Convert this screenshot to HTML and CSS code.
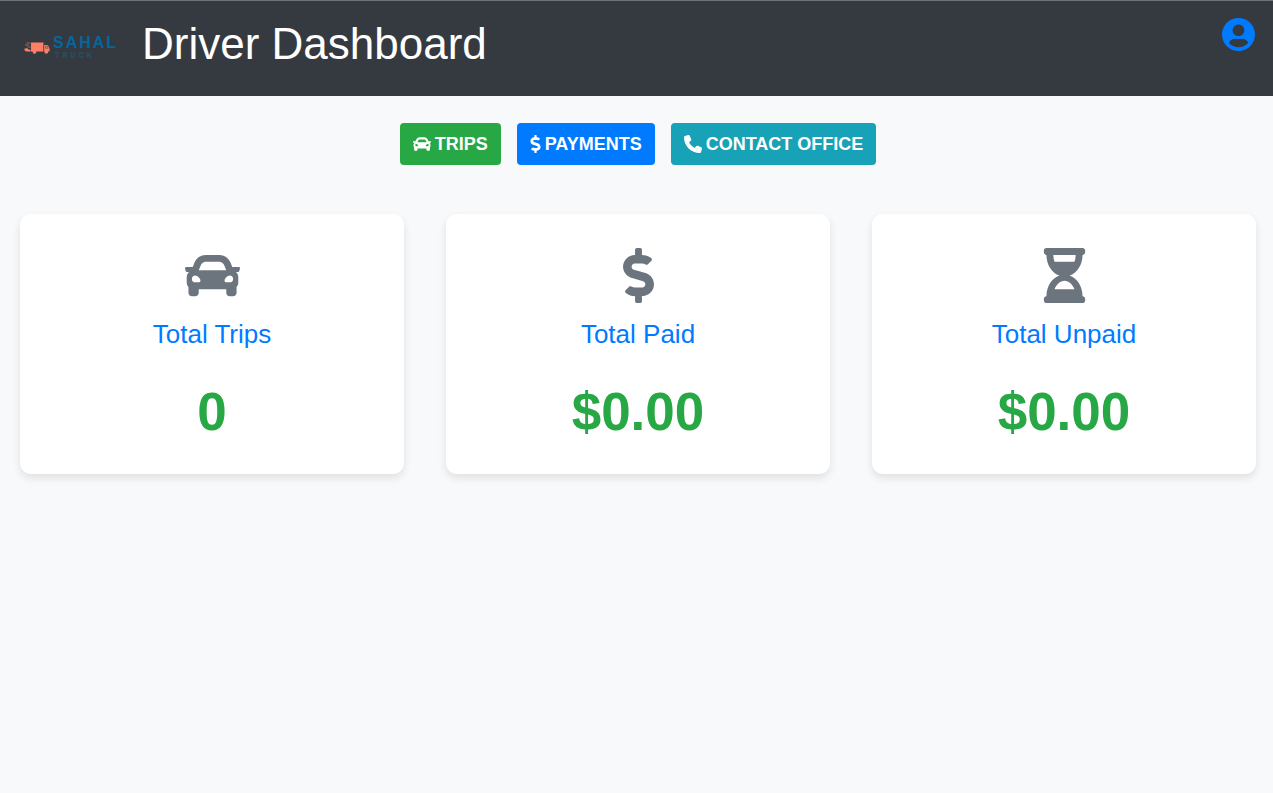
FILE: index.html
```
<!DOCTYPE html>
<html lang="en">
<head>
<meta charset="utf-8">
<meta name="viewport" content="width=device-width, initial-scale=1">
<title>Driver Dashboard</title>
<link rel="stylesheet" href="styles.css">
</head>
<body>
<svg class="sprite" aria-hidden="true">
  <symbol id="car" viewBox="0 0 512 512"><path d="M499.99 176h-59.87l-16.64-41.6C406.38 91.63 365.57 64 319.5 64h-127c-46.06 0-86.88 27.63-103.99 70.4L71.87 176H12.01C4.2 176-1.53 183.34.37 190.91l6 24C7.7 220.25 12.5 224 18.01 224h20.07C24.65 235.73 16 252.78 16 272v48c0 16.12 6.16 30.67 16 41.93V416c0 17.67 14.33 32 32 32h32c17.67 0 32-14.33 32-32v-32h256v32c0 17.67 14.33 32 32 32h32c17.67 0 32-14.33 32-32v-54.07c9.84-11.25 16-25.8 16-41.93v-48c0-19.22-8.65-36.27-22.07-48H494c5.51 0 10.31-3.75 11.64-9.09l6-24c1.89-7.57-3.84-14.91-11.65-14.91zm-352.06-17.83c7.29-18.22 24.94-30.17 44.57-30.17h127c19.63 0 37.28 11.95 44.57 30.17L384 208H128l19.93-49.83zM96 319.8c-19.2 0-32-12.76-32-31.9S76.8 256 96 256s48 28.71 48 47.85-28.8 15.95-48 15.95zm320 0c-19.2 0-48 3.19-48-15.95S396.8 256 416 256s32 12.76 32 31.9-12.8 31.9-32 31.9z"/></symbol>
  <symbol id="dollar" viewBox="0 0 288 512"><path d="M209.2 233.4l-108-31.6C88.7 198.2 80 186.5 80 173.5c0-16.3 13.2-29.5 29.5-29.5h66.3c12.2 0 24.2 3.7 34.2 10.5 6.1 4.1 14.3 3.1 19.5-2l34.8-34c7.1-6.9 6.1-18.4-1.8-24.5C238 74.8 207.4 64.1 176 64V16c0-8.8-7.2-16-16-16h-32c-8.8 0-16 7.2-16 16v48h-2.5C45.8 64-5.4 118.7.5 183.6c4.2 46.1 39.4 83.6 83.8 96.6l102.5 30c12.5 3.7 21.2 15.3 21.2 28.3 0 16.3-13.2 29.5-29.5 29.5h-66.3C100 368 88 364.3 78 357.5c-6.1-4.1-14.3-3.1-19.5 2l-34.8 34c-7.1 6.9-6.1 18.4 1.8 24.5 24.5 19.2 55.1 29.9 86.5 30v48c0 8.8 7.2 16 16 16h32c8.8 0 16-7.2 16-16v-48.2c46.6-.9 90.3-28.6 105.7-72.7 21.5-61.6-14.6-124.8-72.5-141.7z"/></symbol>
  <symbol id="hourglass" viewBox="0 0 384 512"><path d="M360 0H24C10.745 0 0 10.745 0 24v16c0 13.255 10.745 24 24 24 0 90.965 51.016 167.734 120.842 192C75.016 280.266 24 357.035 24 448c-13.255 0-24 10.745-24 24v16c0 13.255 10.745 24 24 24h336c13.255 0 24-10.745 24-24v-16c0-13.255-10.745-24-24-24 0-90.965-51.016-167.734-120.842-192C308.984 231.734 360 154.965 360 64c13.255 0 24-10.745 24-24V24c0-13.255-10.745-24-24-24zm-75.078 384H99.08c17.059-46.797 52.096-80 92.92-80 40.821 0 75.862 33.196 92.922 80zm.019-256H99.078C91.988 108.548 88 86.748 88 64h208c0 22.805-3.987 44.587-11.059 64z"/></symbol>
  <symbol id="phone" viewBox="0 0 512 512"><path d="M164.9 24.6c-7.7-18.6-28-28.5-47.4-23.2l-88 24C12.1 30.2 0 46 0 64C0 311.4 200.6 512 448 512c18 0 33.8-12.1 38.6-29.5l24-88c5.3-19.4-4.6-39.7-23.2-47.4l-96-40c-16.3-6.8-35.2-2.1-46.3 11.6L304.7 368C234.3 334.7 177.3 277.7 144 207.3L193.3 167c13.7-11.2 18.4-30 11.6-46.3l-40-96z"/></symbol>
  <symbol id="user" viewBox="0 8 496 496"><path d="M248 8C111 8 0 119 0 256s111 248 248 248 248-111 248-248S385 8 248 8zm0 96c48.6 0 88 39.4 88 88s-39.4 88-88 88-88-39.4-88-88 39.4-88 88-88zm0 344c-58.7 0-111.3-26.6-146.5-68.2 18.8-35.4 55.6-59.8 98.5-59.8 2.4 0 4.8.4 7.1 1.1 13 4.2 26.6 6.9 40.9 6.9 14.3 0 28-2.7 40.9-6.9 2.3-.7 4.7-1.1 7.1-1.1 42.9 0 79.7 24.4 98.5 59.8C359.3 421.4 306.7 448 248 448z"/></symbol>
</svg>

<header class="topbar">
  <div class="brand">
    <a class="logo" href="#">
      <svg class="truck" viewBox="0 0 26 12" aria-hidden="true">
        <path d="M7 1.2Q7 .5 7.8.5H19.500V9.500H7zM20 3h3q.8 0 1.200.8l1.300 2.500v2.700q0 .5-.6.5H20z"/>
        <path d="M0 6.500q2 .6 2.500-.7Q4 7.500 6.600 8v1.500H2.500Q.4 9 0 6.500z"/>
        <path class="speed" d="M2.500 1h4M1 3h4M3.500 5h3"/>
        <circle cx="10.500" cy="9.800" r="1.900"/>
        <circle cx="22.300" cy="9.800" r="1.900"/>
        <path class="cut" d="M19.800 2v7M21.500 4.200h1.800l.9 2h-2.700z"/>
      </svg>
      <span class="wordmark">
        <span class="name">SAHAL</span>
        <span class="sub">TRUCK</span>
      </span>
    </a>
    <h1 class="title">Driver Dashboard</h1>
  </div>
  <button class="profile" type="button" aria-label="Profile"><svg class="profile-icon" aria-hidden="true"><use href="#user"/></svg></button>
</header>

<main>
  <nav class="actions" aria-label="Sections">
    <a class="btn btn-trips" href="#"><svg class="btn-icon" aria-hidden="true"><use href="#car"/></svg>TRIPS</a>
    <a class="btn btn-payments" href="#"><svg class="btn-icon narrow" aria-hidden="true"><use href="#dollar"/></svg>PAYMENTS</a>
    <a class="btn btn-contact" href="#"><svg class="btn-icon" aria-hidden="true"><use href="#phone"/></svg>CONTACT OFFICE</a>
  </nav>
  <section class="cards">
    <article class="card">
      <svg class="card-icon" aria-hidden="true"><use href="#car"/></svg>
      <h2 class="card-title">Total Trips</h2>
      <p class="card-value">0</p>
    </article>
    <article class="card">
      <svg class="card-icon" aria-hidden="true"><use href="#dollar"/></svg>
      <h2 class="card-title">Total Paid</h2>
      <p class="card-value">$0.00</p>
    </article>
    <article class="card">
      <svg class="card-icon" aria-hidden="true"><use href="#hourglass"/></svg>
      <h2 class="card-title">Total Unpaid</h2>
      <p class="card-value">$0.00</p>
    </article>
  </section>
</main>
</body>
</html>
```
FILE: styles.css
```
* { box-sizing: border-box; }
body {
  margin: 0;
  background: #f8f9fb;
  font-family: "Liberation Sans", Arial, sans-serif;
}
svg { fill: currentColor; }
.sprite { display: none; }

.topbar {
  display: flex;
  justify-content: space-between;
  align-items: flex-start;
  padding: 17px 18px 26px 24px;
  border-top: 1px solid #6c757d;
  background: #343a40;
  color: #fff;
}
.brand { display: flex; gap: 22px; }
.logo {
  display: flex;
  gap: 3px;
  width: 96px;
  padding-top: 19px;
  text-decoration: none;
}
.truck {
  flex: none;
  width: 26px;
  height: 12px;
  margin-top: 5px;
  color: #ff7f66;
}
.speed { fill: none; stroke: currentColor; stroke-width: 1; opacity: .6; }
.cut { fill: none; stroke: #343a40; stroke-width: 1; opacity: .5; }
.wordmark { display: flex; flex-direction: column; gap: 4px; }
.name {
  color: #07659e;
  font: 900 16px/12px "Liberation Sans", Arial, sans-serif;
  letter-spacing: 2px;
}
.sub {
  padding-left: 2px;
  color: #284f69;
  font: 800 7px/6px Inter, sans-serif;
  letter-spacing: 3px;
}
.title {
  margin: 0;
  font-size: 44px;
  font-weight: 400;
  line-height: 52px;
}
.profile {
  padding: 0;
  border: 0;
  background: none;
  color: #007bff;
}
.profile-icon { display: block; width: 33px; height: 33px; }

.actions {
  display: flex;
  flex-wrap: wrap;
  justify-content: center;
  gap: 16px;
  padding: 27px 17px 49px 20px;
}
.btn {
  display: flex;
  align-items: center;
  gap: 4px;
  padding: 8px 13px;
  border-radius: 4px;
  color: #fff;
  font-size: 18px;
  font-weight: 700;
  line-height: 26px;
  text-decoration: none;
}
.btn-trips { background: #28a745; }
.btn-payments { background: #007bff; }
.btn-contact { background: #17a2b8; }
.btn-icon { width: 18px; height: 18px; }
.btn-icon.narrow { width: 11px; }

.cards {
  display: grid;
  grid-template-columns: repeat(auto-fit, minmax(300px, 1fr));
  gap: 42px;
  padding: 0 17px 42px 20px;
}
.card {
  display: flex;
  flex-direction: column;
  align-items: center;
  padding: 34px 20px 30px;
  border-radius: 11px;
  background: #fff;
  box-shadow: 0 4px 9px rgba(0, 0, 0, .1);
  text-align: center;
}
.card-icon { width: 55px; height: 55px; color: #6c757d; }
.card-title {
  margin: 15px 0 30px;
  color: #007bff;
  font-size: 26px;
  font-weight: 400;
  line-height: 32px;
}
.card-value {
  margin: 0;
  color: #28a745;
  font-size: 53px;
  font-weight: 700;
  line-height: 64px;
}
```
